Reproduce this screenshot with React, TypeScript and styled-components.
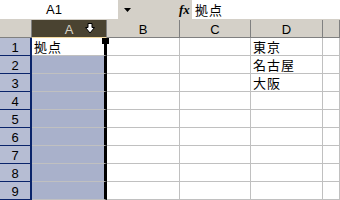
import React from 'react';
import styled, { createGlobalStyle } from 'styled-components';

const GlobalStyle = createGlobalStyle`
  html, body {
    margin: 0;
    padding: 0;
    background: #ffffff;
    overflow: hidden;
  }
  body {
    font-family: "Liberation Sans", "Noto Sans CJK JP", sans-serif;
  }
`;

const COLS = '32px 75px 73px 71px 72px 17px';

const Sheet = styled.div`
  width: 340px;
  height: 200px;
  display: flex;
  flex-direction: column;
  background: #d4d0c8;
  overflow: hidden;
`;

const FormulaBar = styled.div`
  display: flex;
  height: 20px;
  align-items: stretch;
`;

const NameBox = styled.div`
  width: 118px;
  background: #ffffff;
  display: flex;
  align-items: center;
  justify-content: center;
  font-size: 13px;
  color: #000;
  padding-right: 10px;
  box-sizing: border-box;
`;

const DropButton = styled.div`
  width: 18px;
  display: flex;
  align-items: center;
  justify-content: center;
`;

const Spacer = styled.div`
  flex: 1;
`;

const FxLabel = styled.div`
  width: 13px;
  display: flex;
  align-items: center;
  justify-content: flex-start;
  font-family: "Liberation Serif", serif;
  font-style: italic;
  font-weight: bold;
  font-size: 13px;
  color: #000;
`;

const FormulaInput = styled.div`
  width: 145px;
  background: #ffffff;
  display: flex;
  align-items: center;
  padding-left: 3px;
  font-family: "Noto Sans CJK JP", sans-serif;
  font-size: 13px;
  letter-spacing: 1px;
  color: #000;
`;

const Gap = styled.div`
  height: 2px;
`;

const Row = styled.div`
  display: grid;
  grid-template-columns: ${COLS};
  height: 18px;
  flex-shrink: 0;
`;

const Corner = styled.div`
  background: #d4d0c8;
  border-right: 1px solid #808080;
  border-bottom: 1px solid #808080;
`;

const ColHead = styled.div<{ $active?: boolean }>`
  position: relative;
  background: ${(p) => (p.$active ? '#4a4331' : '#d4d0c8')};
  color: ${(p) => (p.$active ? '#d8d4c8' : '#000')};
  border-right: 1px solid #808080;
  border-bottom: 1px solid ${(p) => (p.$active ? '#f2d9a0' : '#808080')};
  display: flex;
  align-items: center;
  justify-content: center;
  font-size: 13px;
  padding-top: 1px;
`;

const CursorIcon = styled.svg`
  position: absolute;
  right: 11px;
  top: 3px;
`;

const RowHead = styled.div`
  background: #b6bdd3;
  border-right: 2px solid #0a246a;
  border-bottom: 1px solid #0a246a;
  display: flex;
  align-items: center;
  justify-content: center;
  font-size: 13px;
  color: #000;
  padding-top: 1px;
`;

const Cell = styled.div<{ $sel?: boolean; $active?: boolean }>`
  position: relative;
  background: ${(p) => (p.$active ? '#ffffff' : p.$sel ? '#a9b1cb' : '#ffffff')};
  border-right: ${(p) => (p.$sel ? '3px solid #000' : '1px solid #c0c0c0')};
  border-bottom: 1px solid #c0c0c0;
  font-family: "Noto Sans CJK JP", sans-serif;
  font-size: 13px;
  letter-spacing: 1px;
  line-height: 17px;
  padding-left: 2px;
  color: #000;
  white-space: nowrap;
  overflow: visible;
  z-index: ${(p) => (p.$active ? 2 : 0)};
`;

const Handle = styled.div`
  position: absolute;
  right: -5px;
  top: 0;
  width: 7px;
  height: 6px;
  background: #000;
`;

const cols = ['A', 'B', 'C', 'D', ''];
const data: Record<number, string> = { 1: '東京', 2: '名古屋', 3: '大阪' };

export default function App() {
  const rows = [1, 2, 3, 4, 5, 6, 7, 8, 9];
  return (
    <>
      <GlobalStyle />
      <Sheet>
        <FormulaBar>
          <NameBox>A1</NameBox>
          <DropButton>
            <svg width="7" height="4" viewBox="0 0 7 4">
              <path d="M0 0 H7 L3.5 4 Z" fill="#000" />
            </svg>
          </DropButton>
          <Spacer />
          <FxLabel>fx</FxLabel>
          <FormulaInput>拠点</FormulaInput>
        </FormulaBar>
        <Gap />
        <Row>
          <Corner />
          {cols.map((c, i) => (
            <ColHead key={i} $active={c === 'A'}>
              {c}
              {c === 'A' && (
                <CursorIcon width="10" height="11" viewBox="0 0 10 11">
                  <path
                    d="M3 0.5 H7 V4.5 H9.5 L5 10 L0.5 4.5 H3 Z"
                    fill="#fff"
                    stroke="#000"
                    strokeWidth="1"
                  />
                </CursorIcon>
              )}
            </ColHead>
          ))}
        </Row>
        {rows.map((r) => (
          <Row key={r}>
            <RowHead>{r}</RowHead>
            <Cell $sel $active={r === 1}>
              {r === 1 ? '拠点' : ''}
              {r === 1 && <Handle />}
            </Cell>
            <Cell />
            <Cell />
            <Cell>{data[r] || ''}</Cell>
            <Cell />
          </Row>
        ))}
      </Sheet>
    </>
  );
}
